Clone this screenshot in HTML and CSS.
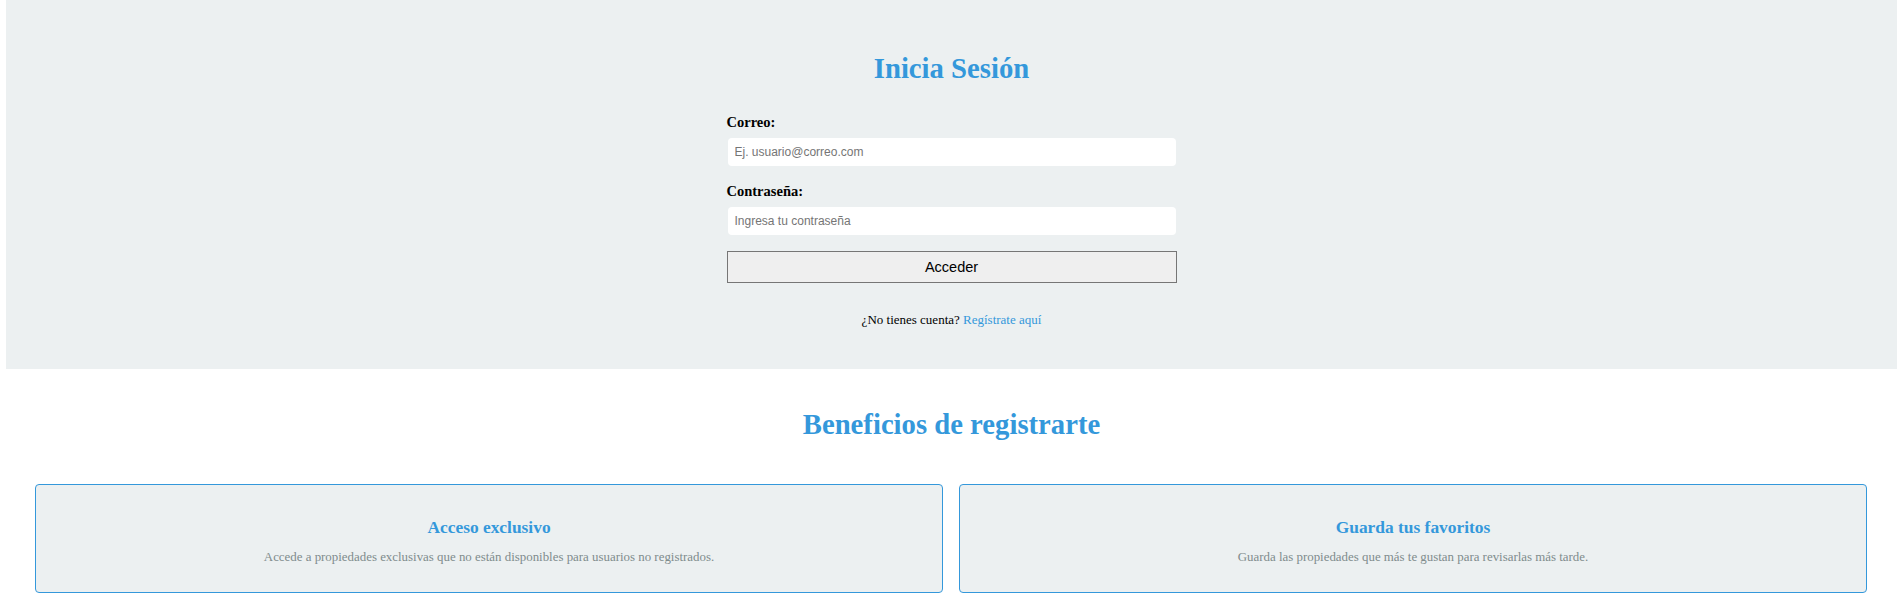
FILE: index.html
```html
<!DOCTYPE html>
<html lang="es">
<head>
<meta charset="utf-8">
<title>Inicia Sesión</title>
<link rel="stylesheet" href="styles.css">
</head>
<body>
<div class="page">
  <section class="login">
    <h1 class="login-title">Inicia Sesión</h1>
    <form class="login-form">
      <label class="field-label" for="correo">Correo:</label>
      <input class="field-input" id="correo" type="email" placeholder="Ej. usuario@correo.com">
      <label class="field-label field-label--next" for="clave">Contraseña:</label>
      <input class="field-input" id="clave" type="password" placeholder="Ingresa tu contraseña">
      <button class="submit-btn" type="button">Acceder</button>
    </form>
    <p class="register-note">¿No tienes cuenta? <a class="register-link" href="#">Regístrate aquí</a></p>
  </section>
  <section class="benefits">
    <h2 class="benefits-title">Beneficios de registrarte</h2>
    <div class="benefit-grid">
      <div class="benefit-card">
        <h3 class="benefit-name">Acceso exclusivo</h3>
        <p class="benefit-text">Accede a propiedades exclusivas que no están disponibles para usuarios no registrados.</p>
      </div>
      <div class="benefit-card">
        <h3 class="benefit-name">Guarda tus favoritos</h3>
        <p class="benefit-text">Guarda las propiedades que más te gustan para revisarlas más tarde.</p>
      </div>
    </div>
  </section>
</div>
</body>
</html>
```
FILE: styles.css
```css
html, body {
  margin: 0;
  padding: 0;
  background: #ffffff;
}

body {
  font-family: "Liberation Serif", "Times New Roman", serif;
  color: #000000;
}

.page {
  width: 1891px;
  margin-left: 6px;
}

.login {
  background: #ecf0f1;
  padding: 51px 0 42px;
  display: flex;
  flex-direction: column;
  align-items: center;
}

.login-title {
  margin: 0;
  font-size: 28.7px;
  line-height: 34px;
  font-weight: bold;
  color: #3498db;
  text-align: center;
}

.login-form {
  width: 450px;
  margin-top: 29px;
  display: flex;
  flex-direction: column;
}

.field-label {
  font-size: 14.5px;
  line-height: 17px;
  font-weight: bold;
  margin-bottom: 7px;
}

.field-label--next {
  margin-top: 17px;
}

.field-input {
  box-sizing: border-box;
  width: 448px;
  height: 28px;
  margin: 0 1px;
  padding: 0 7px;
  border: none;
  border-radius: 4px;
  background: #ffffff;
  font-family: "Liberation Sans", Arial, sans-serif;
  font-size: 12px;
  color: #333;
  outline: none;
}

.field-input::placeholder {
  color: #757575;
}

.submit-btn {
  box-sizing: border-box;
  width: 450px;
  height: 32px;
  margin-top: 16px;
  padding: 0;
  border: 1px solid #767676;
  border-radius: 0;
  background: #efefef;
  font-family: "Liberation Sans", Arial, sans-serif;
  font-size: 14.5px;
  color: #000000;
}

.register-note {
  margin: 29px 0 0;
  font-size: 13px;
  line-height: 15px;
  text-align: center;
}

.register-link {
  color: #3498db;
  text-decoration: none;
}

.benefits {
  padding-top: 38px;
}

.benefits-title {
  margin: 0;
  font-size: 28.7px;
  line-height: 34px;
  font-weight: bold;
  color: #3498db;
  text-align: center;
}

.benefit-grid {
  display: grid;
  grid-template-columns: 1fr 1fr;
  gap: 16px;
  margin: 43px 30px 0 29px;
}

.benefit-card {
  box-sizing: border-box;
  height: 109px;
  border: 1px solid #3498db;
  border-radius: 4px;
  background: #ecf0f1;
  padding: 32px 10px 0;
  text-align: center;
}

.benefit-name {
  margin: 0;
  font-size: 17.4px;
  line-height: 20px;
  font-weight: bold;
  color: #3498db;
}

.benefit-text {
  margin: 13px 0 0;
  font-size: 12.9px;
  line-height: 15px;
  color: #7f8c8d;
}
```
